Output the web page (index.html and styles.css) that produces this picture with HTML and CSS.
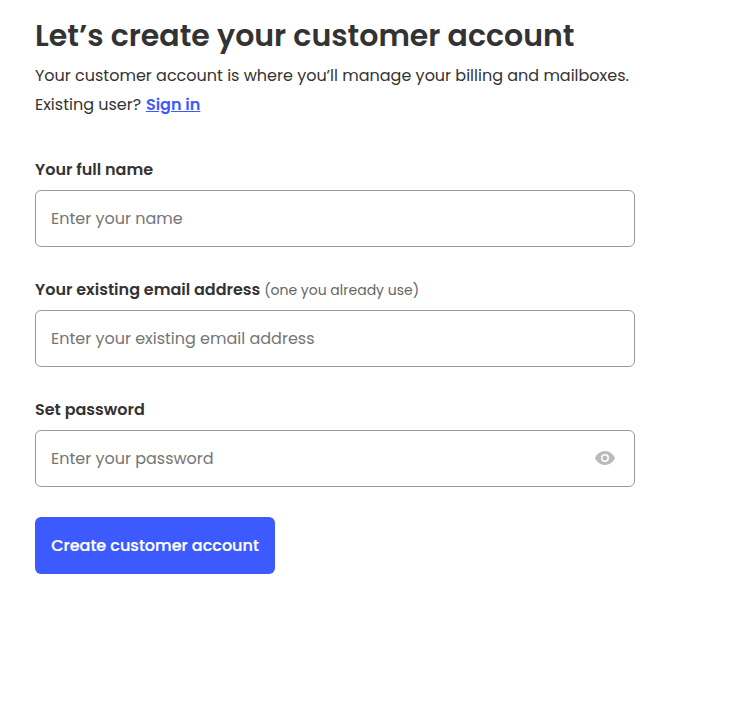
FILE: index.html
```html
<!DOCTYPE html>
<html lang="en">
<head>
  <meta charset="UTF-8">
  <title>Create customer account</title>
  <link rel="stylesheet" href="styles.css">
</head>
<body>
  <div class="container">
    <h1 class="title">Let’s create your customer account</h1>
    <p class="intro">Your customer account is where you’ll manage your billing and mailboxes.</p>
    <p class="intro">Existing user? <a class="sign-in" href="#">Sign in</a></p>

    <form class="signup-form">
      <div class="field">
        <label class="field-label">Your full name</label>
        <div class="input-box"><span class="placeholder">Enter your name</span></div>
      </div>
      <div class="field">
        <label class="field-label">Your existing email address <span class="field-hint">(one you already use)</span></label>
        <div class="input-box"><span class="placeholder">Enter your existing email address</span></div>
      </div>
      <div class="field">
        <label class="field-label">Set password</label>
        <div class="input-box">
          <span class="placeholder">Enter your password</span>
          <svg class="eye-icon" viewBox="0 0 20 14">
            <path d="M10 0C5.500 0 1.700 2.900 0 7c1.700 4.100 5.500 7 10 7s8.300-2.900 10-7c-1.700-4.100-5.500-7-10-7zm0 11a4 4 0 1 1 0-8 4 4 0 0 1 0 8zM10 4.500a2.500 2.500 0 1 0 0 5 2.500 2.500 0 0 0 0-5z"/>
          </svg>
        </div>
      </div>
      <button class="submit-button" type="button">Create customer account</button>
    </form>
  </div>
</body>
</html>
```

FILE: styles.css
```css
* {
  box-sizing: border-box;
}

body {
  margin: 0;
  background-color: #fff;
  color: #333;
  font-family: Poppins, "Open Sans", "Noto Sans", sans-serif;
}

.container {
  width: 600px;
  margin-left: 35px;
  padding-top: 16px;
}

.title {
  margin: 0 0 5px;
  font-size: 30px;
  font-weight: 600;
  line-height: 40px;
}

.intro {
  margin: 0;
  font-size: 16px;
  line-height: 29px;
}

.sign-in {
  margin-left: 0.5px;
  color: #3d5afe;
  font-weight: 600;
}

.signup-form {
  margin-top: 39px;
}

.field + .field {
  margin-top: 31px;
}

.field-label {
  display: block;
  margin-bottom: 8px;
  font-size: 16px;
  font-weight: 600;
  line-height: 24px;
}

.field-hint {
  color: #666;
  font-size: 14px;
  font-weight: 400;
}

.input-box {
  display: flex;
  align-items: center;
  justify-content: space-between;
  height: 57px;
  padding: 0 19px 0 15px;
  border: 1px solid #999;
  border-radius: 6px;
}

.placeholder {
  color: #757575;
  font-size: 16px;
}

.eye-icon {
  width: 20px;
  height: 14px;
  margin-bottom: 1px;
  fill: #bbb;
  fill-rule: evenodd;
}

.submit-button {
  display: block;
  width: 240px;
  height: 57px;
  margin-top: 30px;
  border: none;
  border-radius: 6px;
  background-color: #3d5afe;
  color: #fff;
  font-family: inherit;
  font-size: 16px;
  font-weight: 500;
  -webkit-text-stroke: 0.2px #fff;
}
```
